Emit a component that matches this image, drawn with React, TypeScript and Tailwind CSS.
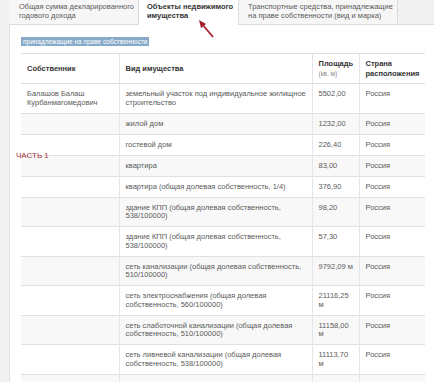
import React from "react";

type Row = {
  owner?: string[];
  kind: string[];
  area: string[];
  country: string;
};

const rows: Row[] = [
  {
    owner: ["Балашов Балаш", "Курбанмагомедович"],
    kind: ["земельный участок под индивидуальное жилищное", "строительство"],
    area: ["5502,00"],
    country: "Россия",
  },
  { kind: ["жилой дом"], area: ["1232,00"], country: "Россия" },
  { kind: ["гостевой дом"], area: ["226,40"], country: "Россия" },
  { kind: ["квартира"], area: ["83,00"], country: "Россия" },
  {
    kind: ["квартира (общая долевая собственность, 1/4)"],
    area: ["376,90"],
    country: "Россия",
  },
  {
    kind: ["здание КПП (общая долевая собственность,", "538/100000)"],
    area: ["98,20"],
    country: "Россия",
  },
  {
    kind: ["здание КПП (общая долевая собственность,", "538/100000)"],
    area: ["57,30"],
    country: "Россия",
  },
  {
    kind: ["сеть канализации (общая долевая собственность,", "510/100000)"],
    area: ["9792,09 м"],
    country: "Россия",
  },
  {
    kind: ["сеть электроснабжения (общая долевая", "собственность, 560/100000)"],
    area: ["21116,25", "м"],
    country: "Россия",
  },
  {
    kind: ["сеть слаботочной канализации (общая долевая", "собственность, 510/100000)"],
    area: ["11158,00", "м"],
    country: "Россия",
  },
  {
    kind: ["сеть ливневой канализации (общая долевая", "собственность, 538/100000)"],
    area: ["11113,70", "м"],
    country: "Россия",
  },
  { kind: ["\u00a0"], area: ["\u00a0"], country: "\u00a0" },
];

function Lines({ items }: { items: string[] }) {
  return (
    <>
      {items.map((t, i) => (
        <div key={i} className="whitespace-nowrap">
          {t}
        </div>
      ))}
    </>
  );
}

export default function App() {
  const td = "align-top pt-[6px] pb-[5.5px] pl-[6px] pr-[2px]";

  return (
    <div className="relative w-[434px] h-[382px] overflow-hidden bg-[#f1f1f1] font-['Liberation_Sans',Arial,sans-serif] text-[7.5px] leading-[9px] text-[#5a5a5a]">
      <div className="ml-[9px] flex flex-col h-full">
        {/* tabs */}
        <div className="flex h-[26px] shrink-0">
          <div className="w-[129px] h-[25px] bg-[#f6f6f6] border-b border-[#dcdcdc] pl-[10px] pt-[1.5px]">
            <div>Общая сумма декларированного</div>
            <div>годового дохода</div>
          </div>
          <div className="w-[101px] h-[26px] bg-white border-x border-[#dcdcdc] pl-[8px] pt-[1.5px] font-bold text-[#333]">
            <div>Объекты недвижимого</div>
            <div>имущества</div>
          </div>
          <div className="w-[159px] h-[25px] bg-[#f6f6f6] border-b border-r border-[#dcdcdc] pl-[9px] pt-[1.5px]">
            <div>Транспортные средства, принадлежащие</div>
            <div>на праве собственности (вид и марка)</div>
          </div>
          <div className="flex-1 h-[25px] bg-[#f1f1f1] border-b border-[#dcdcdc]" />
        </div>

        {/* panel */}
        <div className="flex-1 bg-white border-l border-[#e2e2e2] -mt-[1px] pt-[12px]">
          <div className="ml-[11px] inline-block h-[9px] px-[2px] bg-[#86a9c8] text-white text-[6.5px] leading-[9px]">
            принадлежащие на праве собственности
          </div>

          <table className="ml-[11px] mt-[7px] w-[404px] table-fixed border-collapse">
            <colgroup>
              <col className="w-[98px]" />
              <col className="w-[193px]" />
              <col className="w-[47px]" />
              <col className="w-[66px]" />
            </colgroup>
            <thead>
              <tr className="border-t border-b border-[#dedede] text-[#333] font-bold text-left">
                <th className="align-middle py-[5px] pl-[6px] leading-[9.5px]">Собственник</th>
                <th className="align-middle py-[5px] pl-[6px] border-l border-[#e6e6e6] leading-[9.5px]">
                  Вид имущества
                </th>
                <th className="align-middle py-[5px] pl-[6px] border-l border-[#e6e6e6] leading-[9.5px]">
                  <div>Площадь</div>
                  <div className="font-normal text-[6.5px] text-[#888]">(кв. м)</div>
                </th>
                <th className="align-middle py-[5px] pl-[6px] border-l border-[#e6e6e6] leading-[9.5px]">
                  <div>Страна</div>
                  <div>расположения</div>
                </th>
              </tr>
            </thead>
            <tbody>
              {rows.map((r, i) => (
                <tr
                  key={i}
                  className={`border-b border-[#e0e0e0] leading-[8.5px] ${
                    i % 2 === 1 ? "bg-[#f8f8f8]" : "bg-white"
                  }`}
                >
                  <td className={td}>{r.owner ? <Lines items={r.owner} /> : null}</td>
                  <td className={`${td} border-l border-[#e6e6e6]`}>
                    <Lines items={r.kind} />
                  </td>
                  <td className={`${td} border-l border-[#e6e6e6]`}>
                    <Lines items={r.area} />
                  </td>
                  <td className={`${td} border-l border-[#e6e6e6]`}>{r.country}</td>
                </tr>
              ))}
            </tbody>
          </table>
        </div>
      </div>

      {/* annotation */}
      <div className="absolute left-[16px] top-[151px] text-[8px] leading-[10px] text-[#a83240]">
        ЧАСТЬ 1
      </div>
      <svg className="absolute left-[194px] top-[16px]" width="24" height="24" viewBox="0 0 24 24">
        <line x1="19" y1="21" x2="8" y2="8" stroke="#a51e2a" strokeWidth="1.8" />
        <polygon points="5,4 12,8 7,12" fill="#a51e2a" />
      </svg>
    </div>
  );
}
